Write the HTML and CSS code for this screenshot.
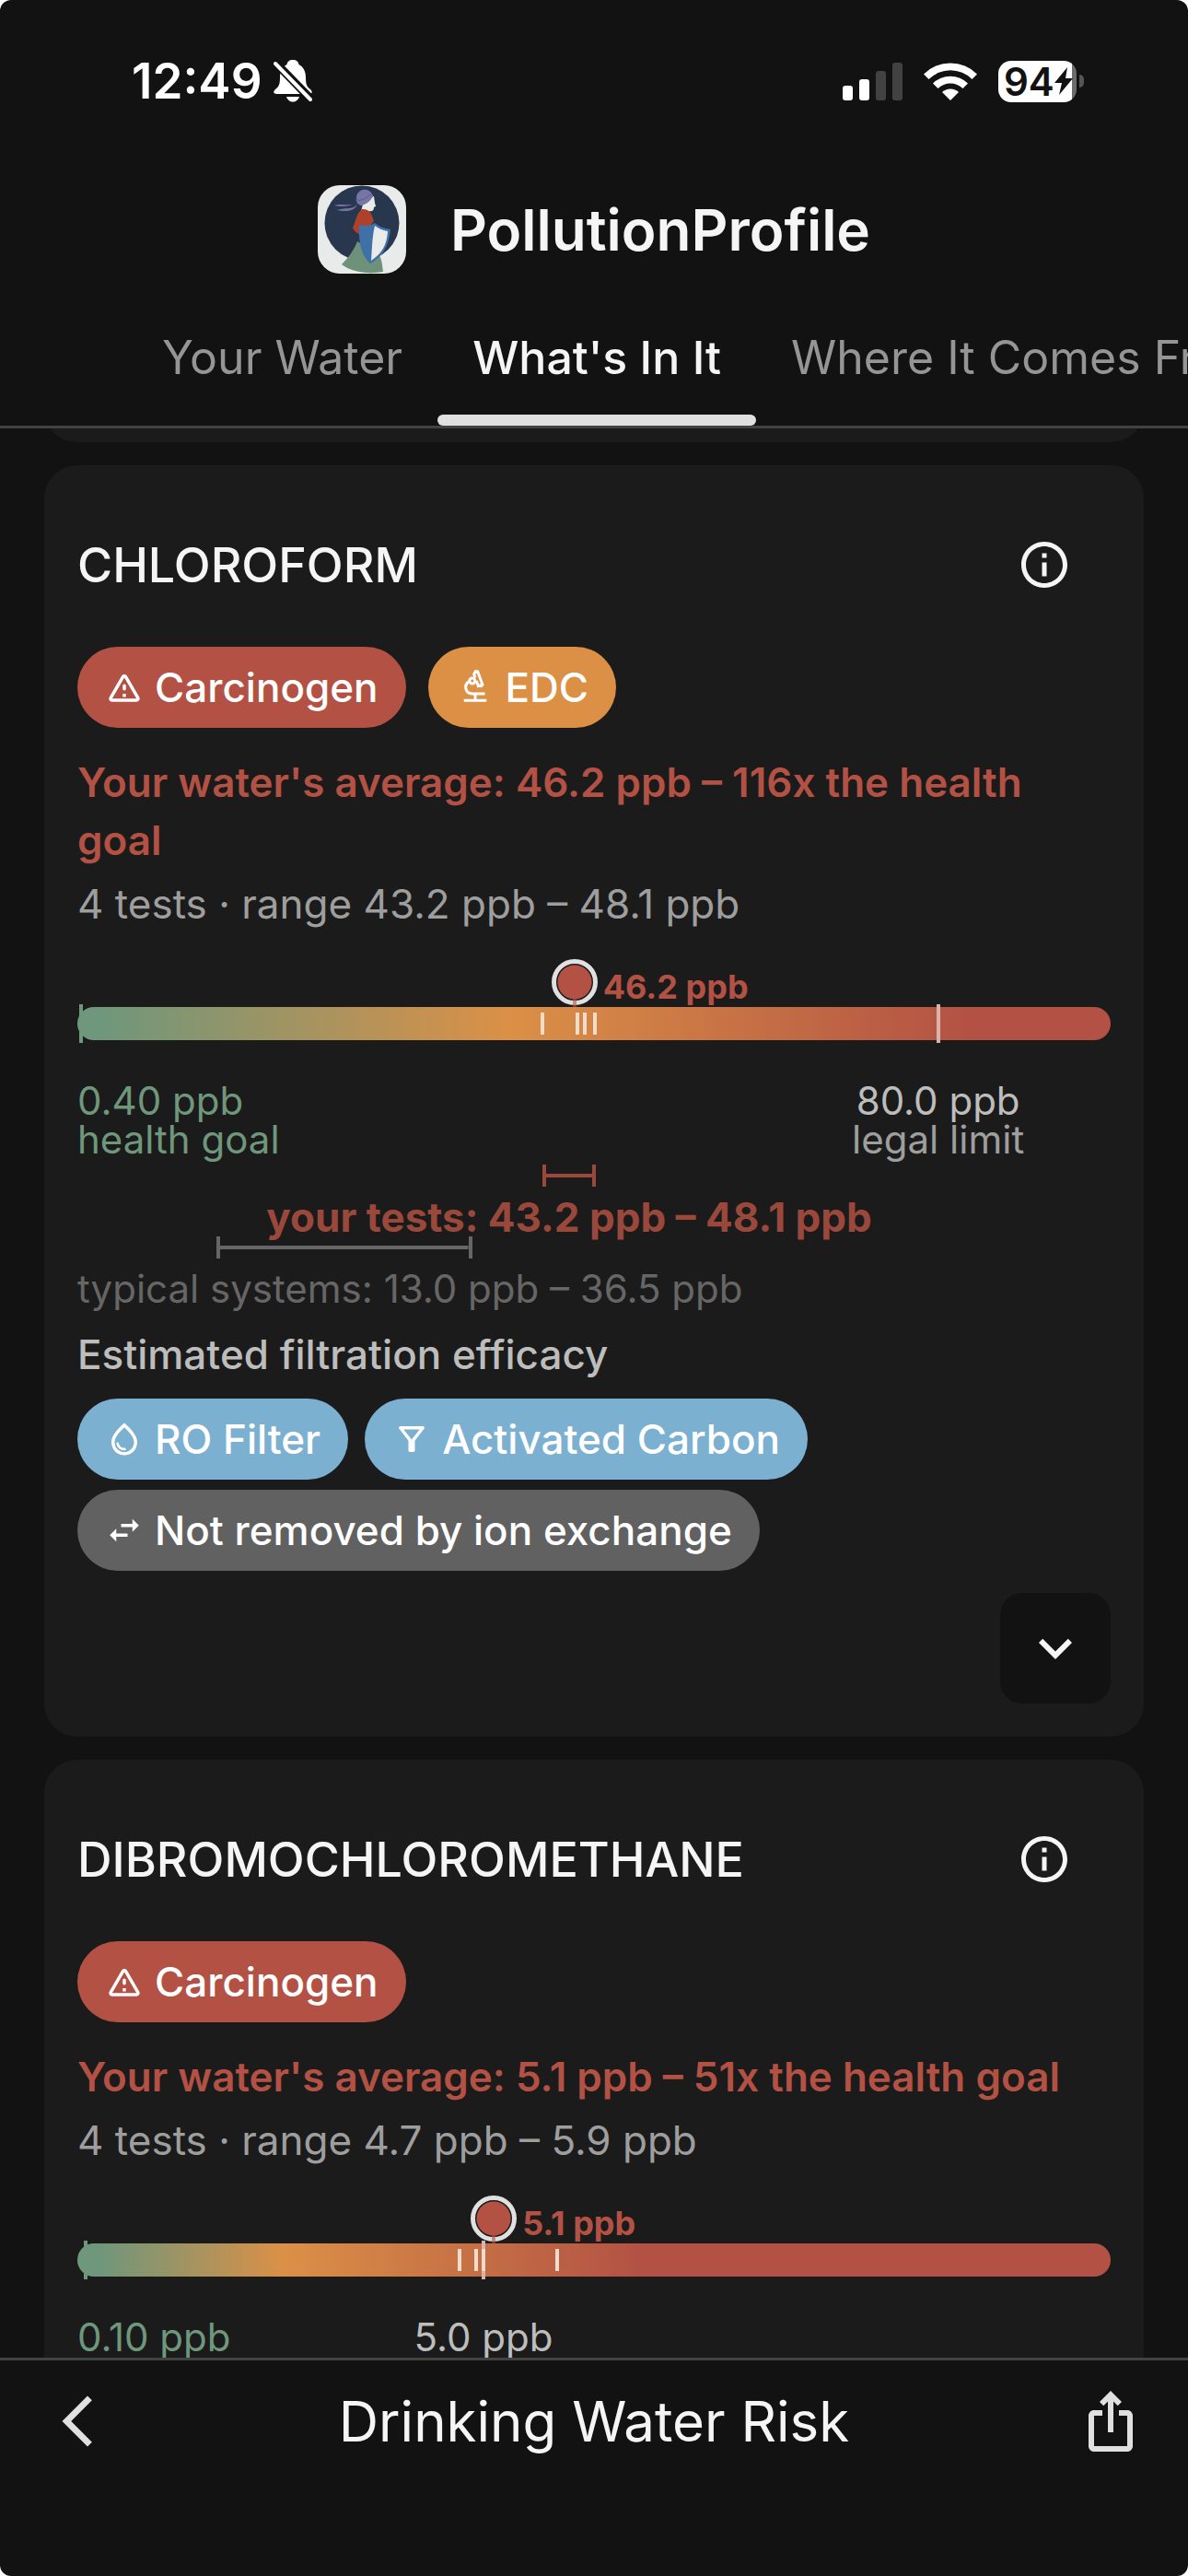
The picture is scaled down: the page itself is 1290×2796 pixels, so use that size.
FILE: index.html
```html
<!DOCTYPE html>
<html lang="en">
<head>
<meta charset="utf-8">
<meta name="viewport" content="width=device-width, initial-scale=1">
<title>PollutionProfile – Drinking Water Risk</title>
<link rel="stylesheet" href="styles.css">
</head>
<body>
<svg class="defs" aria-hidden="true">
  <symbol id="i-info" viewBox="0 0 24 24"><path d="M11 7h2v2h-2zm0 4h2v6h-2zm1-9C6.48 2 2 6.48 2 12s4.48 10 10 10 10-4.48 10-10S17.52 2 12 2zm0 18c-4.41 0-8-3.59-8-8s3.59-8 8-8 8 3.59 8 8-3.59 8-8 8z"/></symbol>
  <symbol id="i-warning" viewBox="0 0 24 24"><path d="M12 5.99L19.53 19H4.47L12 5.99M2.74 18c-.77 1.33.19 3 1.73 3h15.06c1.54 0 2.5-1.67 1.73-3L13.73 4.99c-.77-1.33-2.69-1.33-3.46 0L2.74 18zM11 11v2c0 .55.45 1 1 1s1-.45 1-1v-2c0-.55-.45-1-1-1s-1 .45-1 1zm0 5h2v2h-2z"/></symbol>
  <symbol id="i-biotech" viewBox="0 0 24 24"><g fill="none" stroke="currentColor" stroke-width="1.7"><path d="M5 20.2h14M12 20v-4M18 16h-8a4 4 0 0 1-1.6-7.6"/><circle cx="10.2" cy="8" r="1.7"/><path d="M11 3.2l2.6-.9 2.9 8-2.6.9-1.2-3.200M11 3.200l1 2.800"/><path d="M12 1.300l.5 1.300M15.500 10.500l.5 1.500"/></g></symbol>
  <symbol id="i-drop" viewBox="0 0 24 24"><path d="M12 2c-5.330 4.550-8 8.480-8 11.800 0 4.980 3.800 8.200 8 8.200s8-3.220 8-8.200c0-3.320-2.670-7.250-8-11.800zm0 18c-3.350 0-6-2.570-6-6.200 0-2.340 1.950-5.440 6-9.140 4.050 3.700 6 6.790 6 9.140 0 3.630-2.650 6.200-6 6.200zm-4.170-6c.37 0 .67.26.74.62.41 2.220 2.280 2.980 3.640 2.870.43-.02.79.32.79.75 0 .4-.32.73-.72.75-2.130.13-4.620-1.090-5.190-4.120-.08-.45.28-.87.74-.87z"/></symbol>
  <symbol id="i-filter" viewBox="0 0 24 24"><path d="M7 6h10l-5.010 6.300L7 6zm-2.750-.39C6.270 8.200 10 13 10 13v6c0 .55.45 1 1 1h2c.55 0 1-.45 1-1v-6s3.720-4.800 5.740-7.390c.51-.66.04-1.610-.79-1.610H5.040c-.83 0-1.300.95-.79 1.610z"/></symbol>
  <symbol id="i-swap" viewBox="0 0 24 24"><path d="M6.990 11L3 15l3.990 4v-3H14v-2H6.990v-3zM21 9l-3.990-4v3H10v2h7.010v3L21 9z"/></symbol>
  <symbol id="i-more" viewBox="0 0 24 24"><path d="M16.590 8.590L12 13.170 7.410 8.590 6 10l6 6 6-6z"/></symbol>
  <symbol id="i-back" viewBox="0 0 24 24"><path d="M17.770 3.770L16 2 6 12l10 10 1.770-1.770L9.540 12z"/></symbol>
  <symbol id="i-share" viewBox="0 0 24 24"><path d="M16 5l-1.420 1.420-1.590-1.590V16h-1.980V4.830L9.420 6.420 8 5l4-4 4 4zm4 5v11c0 1.100-.9 2-2 2H6c-1.110 0-2-.9-2-2V10c0-1.110.89-2 2-2h3v2H6v11h12V10h-3V8h3c1.100 0 2 .89 2 2z"/></symbol>
</svg>

<div class="app">
  <header class="top">
    <div class="status">
      <div class="status-left">
        <span class="time">12:49</span>
        <svg class="bell" viewBox="0 0 42 46" aria-label="Silent">
          <path d="M21 0c-4 0-6 2-6.500 5C9 8 7 13 7 19c0 7-1 10-5 13-3 3-2 5 2 5h34c4 0 5-2 2-5-4-3-5-6-5-13 0-6-2-11-7.500-14C27 2 25 0 21 0z"/>
          <path d="M14 40h14c-1 3.500-4 5.500-7 5.500S15 43.500 14 40z"/>
          <path class="bell-cut" d="M3 4l37 38"/>
          <path class="bell-slash" d="M2 4l38 39"/>
        </svg>
      </div>
      <div class="status-right">
        <svg class="signal" viewBox="0 0 65 42" aria-label="Signal">
          <rect x="0" y="26" width="11" height="16" rx="3"/>
          <rect x="18" y="19" width="11" height="23" rx="3"/>
          <rect class="dim" x="36" y="10" width="11" height="32" rx="3"/>
          <rect class="dim" x="54" y="1" width="11" height="41" rx="3"/>
        </svg>
        <svg class="wifi" viewBox="0 0 58 42" aria-label="Wi-Fi">
          <path d="M0 13.500a41 41 0 0 1 58 0l-5.500 5.500a33.500 33.500 0 0 0-47 0z"/>
          <path d="M10 23.500a27 27 0 0 1 38 0l-5.500 5.500a19.500 19.500 0 0 0-27 0z"/>
          <path d="M20 33a13 13 0 0 1 18 0l-9 9z"/>
        </svg>
        <div class="battery">
          <span class="level">94</span>
          <svg class="bolt" viewBox="0 0 20 30" aria-hidden="true"><path d="M14 0L0 17h8L5 30l15-18h-8z"/></svg>
        </div>
      </div>
    </div>

    <div class="brand">
      <svg class="logo" viewBox="0 0 96 96" aria-hidden="true">
        <rect width="96" height="96" fill="#e9ebea"/>
        <circle cx="48" cy="41" r="40.500" fill="#28374d"/>
        <path d="M43 61C39 71 33 79 26 86c10 8 28 11 45 8-1-7-1-12-4-18z" fill="#6d9179"/>
        <path d="M50 17l11-5 1 7 1 4-2 1c0 4-2 5-7 4l-1 7-7-3z" fill="#e9ebea"/>
        <path d="M42 13c1-9 13-12 18-2-1 5-7 10-13 11-4-1-6-5-5-9z" fill="#7675a6"/>
        <path d="M43 19c-8 5-16 0-25 3 8 2 18 1 25-3zM43 21c-5 6-14 3-22 6 8 2 19 2 22-6z" fill="#7675a6"/>
        <path d="M42 15c3 4 11-1 17-6" stroke="#5c5b8d" stroke-width="1" fill="none"/>
        <path d="M48 26c4 0 8 1 10 5l3 8-5 6H46l-1 8c-3-1-6-4-7-7 3-5 4-16 10-20z" fill="#ae412c"/>
        <path d="M45 43c7 2 12 1 17-2 5 4 10 6 17 7-2 17-7 29-22 37-9-8-13-21-12-42z" fill="#3f70a7"/>
        <path d="M62 44c4 3 8 5 14 6-1 14-5 23-18 32 1-13 1-26 4-38z" fill="#e9ebea"/>
      </svg>
      <h1>PollutionProfile</h1>
    </div>

    <nav class="tabs">
      <a href="#water" class="tab">Your Water</a>
      <a href="#contents" class="tab active" aria-current="page">What's In It</a>
      <a href="#sources" class="tab">Where It Comes From</a>
    </nav>
  </header>

  <main class="list">
    <div class="card card-previous"></div>

    <article class="card">
      <div class="card-head">
        <h2>CHLOROFORM</h2>
        <button class="info" aria-label="About chloroform"><svg><use href="#i-info"/></svg></button>
      </div>
      <div class="chips hazards">
        <span class="chip red"><svg><use href="#i-warning"/></svg>Carcinogen</span>
        <span class="chip orange"><svg><use href="#i-biotech"/></svg>EDC</span>
      </div>
      <p class="average">Your water's average: 46.2 ppb – 116x the health goal</p>
      <p class="tests">4 tests · range 43.2 ppb – 48.1 ppb</p>

      <div class="scale">
        <i class="goal-tick" style="left: 0.4%"></i>
        <div class="track" style="--mid: 41.7%; --high: 87%"></div>
        <i class="limit-tick" style="left: 83.3%"></i>
        <i class="test-tick" style="left: 45%"></i>
        <i class="test-tick" style="left: 48.4%"></i>
        <i class="test-tick" style="left: 49.1%"></i>
        <i class="test-tick" style="left: 50.1%"></i>
        <div class="marker" style="left: 48.1%"><i class="dot"></i><b>46.2 ppb</b></div>
      </div>
      <div class="legend">
        <div class="goal">0.40 ppb<br>health goal</div>
        <div class="limit" style="left: 83.3%">80.0 ppb<br><span>legal limit</span></div>
      </div>
      <div class="range yours">
        <i class="bracket" style="margin-left: 45%; width: 5.2%"></i>
        <p style="left: 47.6%">your tests: 43.2 ppb – 48.1 ppb</p>
      </div>
      <div class="range typical">
        <i class="bracket" style="margin-left: 13.5%; width: 24.7%"></i>
        <p>typical systems: 13.0 ppb – 36.5 ppb</p>
      </div>

      <h3>Estimated filtration efficacy</h3>
      <div class="chips filters">
        <span class="chip blue"><svg><use href="#i-drop"/></svg>RO Filter</span>
        <span class="chip blue"><svg><use href="#i-filter"/></svg>Activated Carbon</span>
        <span class="chip gray"><svg><use href="#i-swap"/></svg>Not removed by ion exchange</span>
      </div>
      <button class="expand" aria-label="Show more"><svg><use href="#i-more"/></svg></button>
    </article>

    <article class="card">
      <div class="card-head">
        <h2>DIBROMOCHLOROMETHANE</h2>
        <button class="info" aria-label="About dibromochloromethane"><svg><use href="#i-info"/></svg></button>
      </div>
      <div class="chips hazards">
        <span class="chip red"><svg><use href="#i-warning"/></svg>Carcinogen</span>
      </div>
      <p class="average">Your water's average: 5.1 ppb – 51x the health goal</p>
      <p class="tests">4 tests · range 4.7 ppb – 5.9 ppb</p>

      <div class="scale">
        <i class="goal-tick" style="left: 0.8%"></i>
        <div class="track" style="--mid: 20%; --high: 55%"></div>
        <i class="limit-tick" style="left: 39.3%"></i>
        <i class="test-tick" style="left: 37%"></i>
        <i class="test-tick" style="left: 38.6%"></i>
        <i class="test-tick" style="left: 39.3%"></i>
        <i class="test-tick" style="left: 46.4%"></i>
        <div class="marker" style="left: 40.3%"><i class="dot"></i><b>5.1 ppb</b></div>
      </div>
      <div class="legend">
        <div class="goal">0.10 ppb</div>
        <div class="limit" style="left: 39.3%">5.0 ppb</div>
      </div>
    </article>
  </main>

  <footer class="bottom">
    <button class="icon-button back" aria-label="Back"><svg><use href="#i-back"/></svg></button>
    <h2>Drinking Water Risk</h2>
    <button class="icon-button share" aria-label="Share"><svg><use href="#i-share"/></svg></button>
  </footer>
</div>
</body>
</html>
```
FILE: styles.css
```css
:root {
  --bg: #121212;
  --card: #1b1b1b;
  --line: #424242;
  --text: #f5f5f5;
  --muted: #9e9e9e;
  --green: #6e977b;
  --orange: #db9046;
  --red: #b25144;
}

* {
  box-sizing: border-box;
}

html {
  background: #fff;
}

body {
  margin: 0;
  font-family: Inter, "Liberation Sans", sans-serif;
  font-size: 42px;
  color: var(--text);
}

h1, h2, h3, p {
  margin: 0;
}

button {
  padding: 0;
  border: 0;
  background: none;
  color: inherit;
  font: inherit;
}

svg {
  display: block;
  flex: none;
  fill: currentColor;
}

.defs {
  position: absolute;
  width: 0;
  height: 0;
}

.app {
  display: flex;
  flex-direction: column;
  height: 100vh;
  overflow: hidden;
  border-radius: 12px;
  background: var(--bg);
}

/* Header */

.top {
  flex: none;
  border-bottom: 3px solid var(--line);
}

.status {
  display: flex;
  align-items: center;
  justify-content: space-between;
  height: 176px;
  padding: 0 113px 0 143px;
  color: #fff;
}

.status-left,
.status-right {
  display: flex;
  align-items: center;
}

.status-left {
  gap: 12px;
}

.status-right {
  gap: 23px;
}

.time {
  font-size: 53px;
  font-weight: 600;
}

.bell {
  width: 42px;
  height: 46px;
}

.bell-cut {
  stroke: var(--bg);
  stroke-width: 9;
}

.bell-slash {
  stroke: currentColor;
  stroke-width: 4;
  stroke-linecap: round;
}

.signal {
  width: 65px;
  height: 42px;
}

.dim {
  fill: var(--line);
}

.wifi {
  width: 58px;
  height: 42px;
}

.battery {
  position: relative;
  display: flex;
  align-items: center;
  width: 85px;
  height: 45px;
  margin-right: 8px;
  padding-left: 6px;
  border-radius: 14px;
  background: linear-gradient(90deg, #fff 80px, #6b6b6b 80px);
  color: var(--bg);
}

.battery::after {
  content: "";
  position: absolute;
  right: -8px;
  width: 5px;
  height: 14px;
  border-radius: 0 5px 5px 0;
  background: #555;
}

.level {
  font-size: 42px;
  font-weight: 600;
  line-height: 45px;
}

.bolt {
  width: 20px;
  height: 30px;
}

.brand {
  display: flex;
  align-items: center;
  justify-content: center;
  gap: 48px;
  height: 146px;
}

.logo {
  width: 96px;
  height: 96px;
  border-radius: 24px;
}

h1 {
  font-size: 62px;
  font-weight: 600;
}

.tabs {
  display: flex;
  height: 140px;
  padding-left: 138px;
  overflow: hidden;
}

.tab {
  position: relative;
  flex: none;
  padding: 36px 38px 0;
  font-size: 50px;
  line-height: 60px;
  color: #959595;
  text-decoration: none;
  white-space: nowrap;
}

.active {
  font-weight: 500;
  color: var(--text);
}

.active::after {
  content: "";
  position: absolute;
  right: 0;
  bottom: 0;
  left: 0;
  height: 12px;
  border-radius: 6px;
  background: #e0e0e0;
}

/* Contaminant cards */

.list {
  display: flex;
  flex: 1;
  flex-direction: column;
  gap: 25px;
  min-height: 0;
  padding: 0 48px;
  overflow: hidden;
}

.card {
  flex: none;
  padding: 72px 36px 36px;
  border-radius: 36px;
  background: var(--card);
}

.card:last-child {
  padding-bottom: 72px;
}

.card-previous {
  margin-top: -129px;
  padding-bottom: 72px;
}

.card-head {
  display: flex;
  align-items: center;
  justify-content: space-between;
  height: 72px;
  padding-right: 42px;
}

.card-head h2 {
  font-size: 52px;
  font-weight: 500;
}

.info svg {
  width: 60px;
  height: 60px;
}

.chips {
  display: flex;
  flex-wrap: wrap;
}

.hazards {
  gap: 24px;
  margin: 53px 0 28px;
}

.filters {
  gap: 11px 18px;
  margin-top: 16px;
}

.chip {
  display: flex;
  align-items: center;
  gap: 12px;
  height: 88px;
  padding: 0 30px;
  border-radius: 44px;
  font-size: 44px;
  font-weight: 500;
  color: #fff;
}

.chip svg {
  width: 42px;
  height: 42px;
}

.red {
  background: var(--red);
}

.orange {
  background: var(--orange);
}

.blue {
  background: #7bb0d1;
}

.gray {
  background: #616161;
}

.average {
  padding-right: 24px;
  font-size: 44px;
  font-weight: 600;
  line-height: 63px;
  color: var(--red);
}

.tests {
  margin-top: 6px;
  font-size: 44px;
  line-height: 63px;
  color: var(--muted);
}

/* Concentration scale */

.scale {
  position: relative;
  margin-top: 80px;
}

.track {
  position: relative;
  height: 36px;
  border-radius: 18px;
  background: linear-gradient(90deg, var(--green) 2%, var(--orange) var(--mid), var(--red) var(--high));
}

.goal-tick,
.limit-tick,
.test-tick {
  position: absolute;
  top: -3px;
  bottom: -3px;
  width: 4px;
  background: var(--green);
  transform: translateX(-50%);
}

.limit-tick {
  background: #d8b3ab;
}

.test-tick {
  top: 6px;
  bottom: 6px;
  background: #f0dccb;
}

.marker {
  position: absolute;
  bottom: 36px;
  display: flex;
  align-items: flex-end;
  gap: 6px;
  height: 52px;
  margin-left: -25px;
}

.marker b {
  font-size: 36px;
  font-weight: 700;
  line-height: 44px;
  color: var(--red);
  white-space: nowrap;
}

.dot {
  position: relative;
  align-self: flex-start;
  width: 50px;
  height: 50px;
  border: 5px solid #e0e0e0;
  border-radius: 50%;
  background: radial-gradient(circle, var(--red) 18px, var(--card) 19px);
}

.dot::after {
  content: "";
  position: absolute;
  top: 38px;
  left: 18px;
  width: 4px;
  height: 9px;
  background: var(--red);
  opacity: 0.6;
}

.legend {
  position: relative;
  margin-top: 45px;
  line-height: 42px;
}

.goal {
  color: var(--green);
}

.limit {
  position: absolute;
  top: 0;
  color: #bdbdbd;
  text-align: center;
  white-space: nowrap;
  transform: translateX(-50%);
}

.limit span {
  color: var(--muted);
}

.range {
  line-height: 42px;
}

.yours {
  margin-top: 6px;
  color: #9b483c;
}

.typical {
  color: #666;
}

.range p {
  margin-top: 12px;
}

.yours p {
  position: relative;
  width: max-content;
  font-size: 44px;
  font-weight: 700;
  transform: translateX(-50%);
}

.bracket {
  display: block;
  height: 24px;
  border: solid;
  border-width: 0 4px;
  background: linear-gradient(currentColor, currentColor) center / 100% 4px no-repeat;
}

h3 {
  margin-top: 19px;
  font-size: 44px;
  font-weight: 500;
  line-height: 63px;
  color: #bdbdbd;
}

.expand {
  display: grid;
  place-items: center;
  width: 120px;
  height: 120px;
  margin: 24px 0 0 auto;
  border-radius: 24px;
  background: var(--bg);
}

.expand svg {
  width: 72px;
  height: 72px;
}

/* Bottom bar */

.bottom {
  display: flex;
  flex: none;
  align-items: center;
  justify-content: space-between;
  height: 237px;
  padding: 0 48px 102px;
  border-top: 3px solid var(--line);
}

.bottom h2 {
  font-size: 60px;
  font-weight: 400;
}

.icon-button {
  display: grid;
  place-items: center;
  width: 72px;
  height: 72px;
  color: #e0e0e0;
}

.icon-button svg {
  width: 72px;
  height: 72px;
}

.back svg {
  width: 66px;
  height: 66px;
}
```
